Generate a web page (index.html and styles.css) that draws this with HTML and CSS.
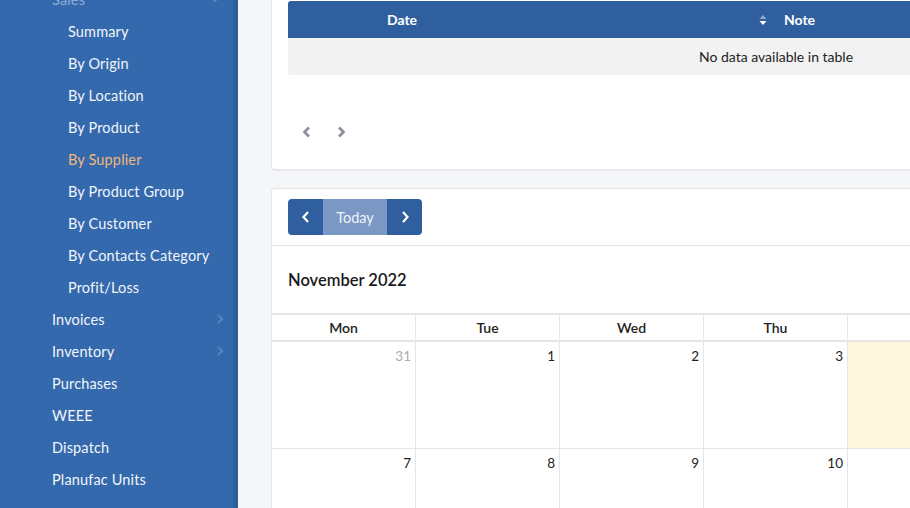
FILE: index.html
```html
<!DOCTYPE html>
<html>
<head>
<meta charset="utf-8">
<link rel="stylesheet" href="styles.css">
</head>
<body>
<div class="app">
  <aside class="sidebar">
    <ul class="nav">
      <li class="item top open"><span>Sales</span><span class="chev down">&#8964;</span></li>
      <li class="item sub">Summary</li>
      <li class="item sub">By Origin</li>
      <li class="item sub">By Location</li>
      <li class="item sub">By Product</li>
      <li class="item sub active">By Supplier</li>
      <li class="item sub">By Product Group</li>
      <li class="item sub">By Customer</li>
      <li class="item sub">By Contacts Category</li>
      <li class="item sub">Profit/Loss</li>
      <li class="item top"><span>Invoices</span><svg class="chev" width="6" height="10" viewBox="0 0 6 10"><path d="M1 1l4 4-4 4" fill="none" stroke="currentColor" stroke-width="1.6"/></svg></li>
      <li class="item top"><span>Inventory</span><svg class="chev" width="6" height="10" viewBox="0 0 6 10"><path d="M1 1l4 4-4 4" fill="none" stroke="currentColor" stroke-width="1.6"/></svg></li>
      <li class="item top">Purchases</li>
      <li class="item top">WEEE</li>
      <li class="item top">Dispatch</li>
      <li class="item top">Planufac Units</li>
    </ul>
  </aside>
  <div class="edge"></div>
  <main class="main">
    <section class="card notes">
      <div class="dt">
        <div class="dt-head">
          <div class="th th-date">Date</div>
          <div class="th th-sort"><svg width="8" height="12" viewBox="0 0 8 12"><path d="M4 1L7.5 5H0.5z" fill="#8fa9d0"/><path d="M4 11L7.5 7H0.5z" fill="#ffffff"/></svg></div>
          <div class="th th-note">Note</div>
        </div>
        <div class="dt-empty">No data available in table</div>
      </div>
      <div class="pager">
        <svg width="10" height="12" viewBox="0 0 10 12"><path d="M7 1.5L2.5 6 7 10.5" fill="none" stroke="#8a8f98" stroke-width="2.6"/></svg>
        <svg width="10" height="12" viewBox="0 0 10 12"><path d="M3 1.5L7.5 6 3 10.5" fill="none" stroke="#8a8f98" stroke-width="2.6"/></svg>
      </div>
    </section>
    <section class="card cal">
      <div class="cal-toolbar">
        <div class="btn-group">
          <button class="btn arrow"><svg width="10" height="14" viewBox="0 0 10 14"><path d="M7 2L2.5 7 7 12" fill="none" stroke="#fff" stroke-width="2.2"/></svg></button>
          <button class="btn today">Today</button>
          <button class="btn arrow"><svg width="10" height="14" viewBox="0 0 10 14"><path d="M3 2L7.5 7 3 12" fill="none" stroke="#fff" stroke-width="2.2"/></svg></button>
        </div>
      </div>
      <h2 class="cal-title">November 2022</h2>
      <div class="grid">
        <div class="dow">Mon</div><div class="dow">Tue</div><div class="dow">Wed</div><div class="dow">Thu</div><div class="dow">Fri</div><div class="dow">Sat</div>
        <div class="day other">31</div><div class="day">1</div><div class="day">2</div><div class="day">3</div><div class="day today-cell">4</div><div class="day">5</div>
        <div class="day">7</div><div class="day">8</div><div class="day">9</div><div class="day">10</div><div class="day">11</div><div class="day">12</div>
      </div>
    </section>
  </main>
</div>
</body>
</html>
```
FILE: styles.css
```css
* { box-sizing: border-box; }
html, body { margin: 0; padding: 0; }
body {
  width: 910px;
  height: 508px;
  overflow: hidden;
  font-family: Lato, "Noto Sans", sans-serif;
  background: #f5f6f8;
  color: #1f1f1f;
}
.app { display: flex; height: 508px; overflow: hidden; }
.sidebar {
  width: 233px;
  flex: none;
  background: #3469ad;
  overflow: hidden;
}
.edge { width: 5px; flex: none; background: #2c5e9e; }
.nav { list-style: none; margin: -17px 0 0; padding: 0; }
.item {
  height: 32px;
  display: flex;
  align-items: center;
  justify-content: space-between;
  padding-right: 10px;
  color: #f2f5fa;
  font-size: 14.5px;
  letter-spacing: 0.15px;
}
.item.top { padding-left: 52px; }
.item.sub { padding-left: 68px; }
.item.active { color: #f1b77c; }
.item.open { color: #8fb0da; }
.chev { color: #5f8ac2; }
.chev.down { font-size: 14px; margin-top: -6px; margin-right: 2px; }

.main {
  flex: none;
  width: 672px;
  padding-left: 33px;
  margin-top: -17px;
  display: flex;
  flex-direction: column;
  gap: 18px;
}
.card {
  flex: none;
  width: 700px;
  background: #fff;
  border: 1px solid #e3e5e8;
  border-right: none;
  border-radius: 4px 0 0 4px;
  box-shadow: 0 1px 1px rgba(0,0,0,0.05);
}
.notes { padding: 17px 0 0 16px; height: 187px; }
.dt { width: 976px; }
.dt-head {
  height: 37px;
  background: #2f5f9e;
  border-radius: 3px 0 0 0;
  display: flex;
  align-items: center;
  color: #fff;
  font-weight: 700;
  font-size: 14px;
}
.th-date { width: 228px; text-align: center; }
.th-sort { width: 254px; display: flex; justify-content: flex-end; padding-right: 3px; }
.th-sort svg { display: block; }
.th-note { padding-left: 14px; }
.dt-empty {
  height: 37px;
  background: #f2f2f2;
  border-radius: 0 0 0 3px;
  display: flex;
  align-items: center;
  justify-content: center;
  font-size: 14px;
  color: #222;
}
.pager {
  display: flex;
  gap: 24px;
  padding: 51px 0 0 14px;
}
.pager svg { display: block; }

.cal { height: 340px; }
.cal-toolbar {
  height: 57px;
  padding: 10px 16px;
  border-bottom: 1px solid #e3e5e8;
}
.btn-group { display: flex; height: 36px; border-radius: 4px; overflow: hidden; width: 134px; }
.btn {
  border: none;
  margin: 0;
  padding: 0;
  font-family: inherit;
  font-size: 14.5px;
  color: #fff;
  display: flex;
  align-items: center;
  justify-content: center;
}
.btn.arrow { width: 35px; background: #2f5f9e; }
.btn.today { width: 64px; background: #7b98c4; color: #eef2f8; }
.cal-title {
  margin: 0;
  padding: 24px 16px 0;
  height: 67px;
  font-size: 16.5px;
  font-weight: 600;
  color: #1a1a1a;
}
.grid {
  display: grid;
  grid-template-columns: repeat(6, 144px);
  grid-template-rows: 27px 107px 107px;
  border-top: 2px solid #e6e6e6;
}
.dow {
  border-right: 1px solid #e6e6e6;
  border-bottom: 2px solid #e6e6e6;
  display: flex;
  align-items: center;
  justify-content: center;
  font-size: 14px;
  font-weight: 600;
  color: #222;
}
.day {
  border-right: 1px solid #e6e6e6;
  border-bottom: 1px solid #e6e6e6;
  text-align: right;
  padding: 6px 4px 0 0;
  font-size: 13.5px;
  color: #222;
}
.day.other { color: #aaa; }
.day.today-cell { background: #fff8e1; color: transparent; }
```
